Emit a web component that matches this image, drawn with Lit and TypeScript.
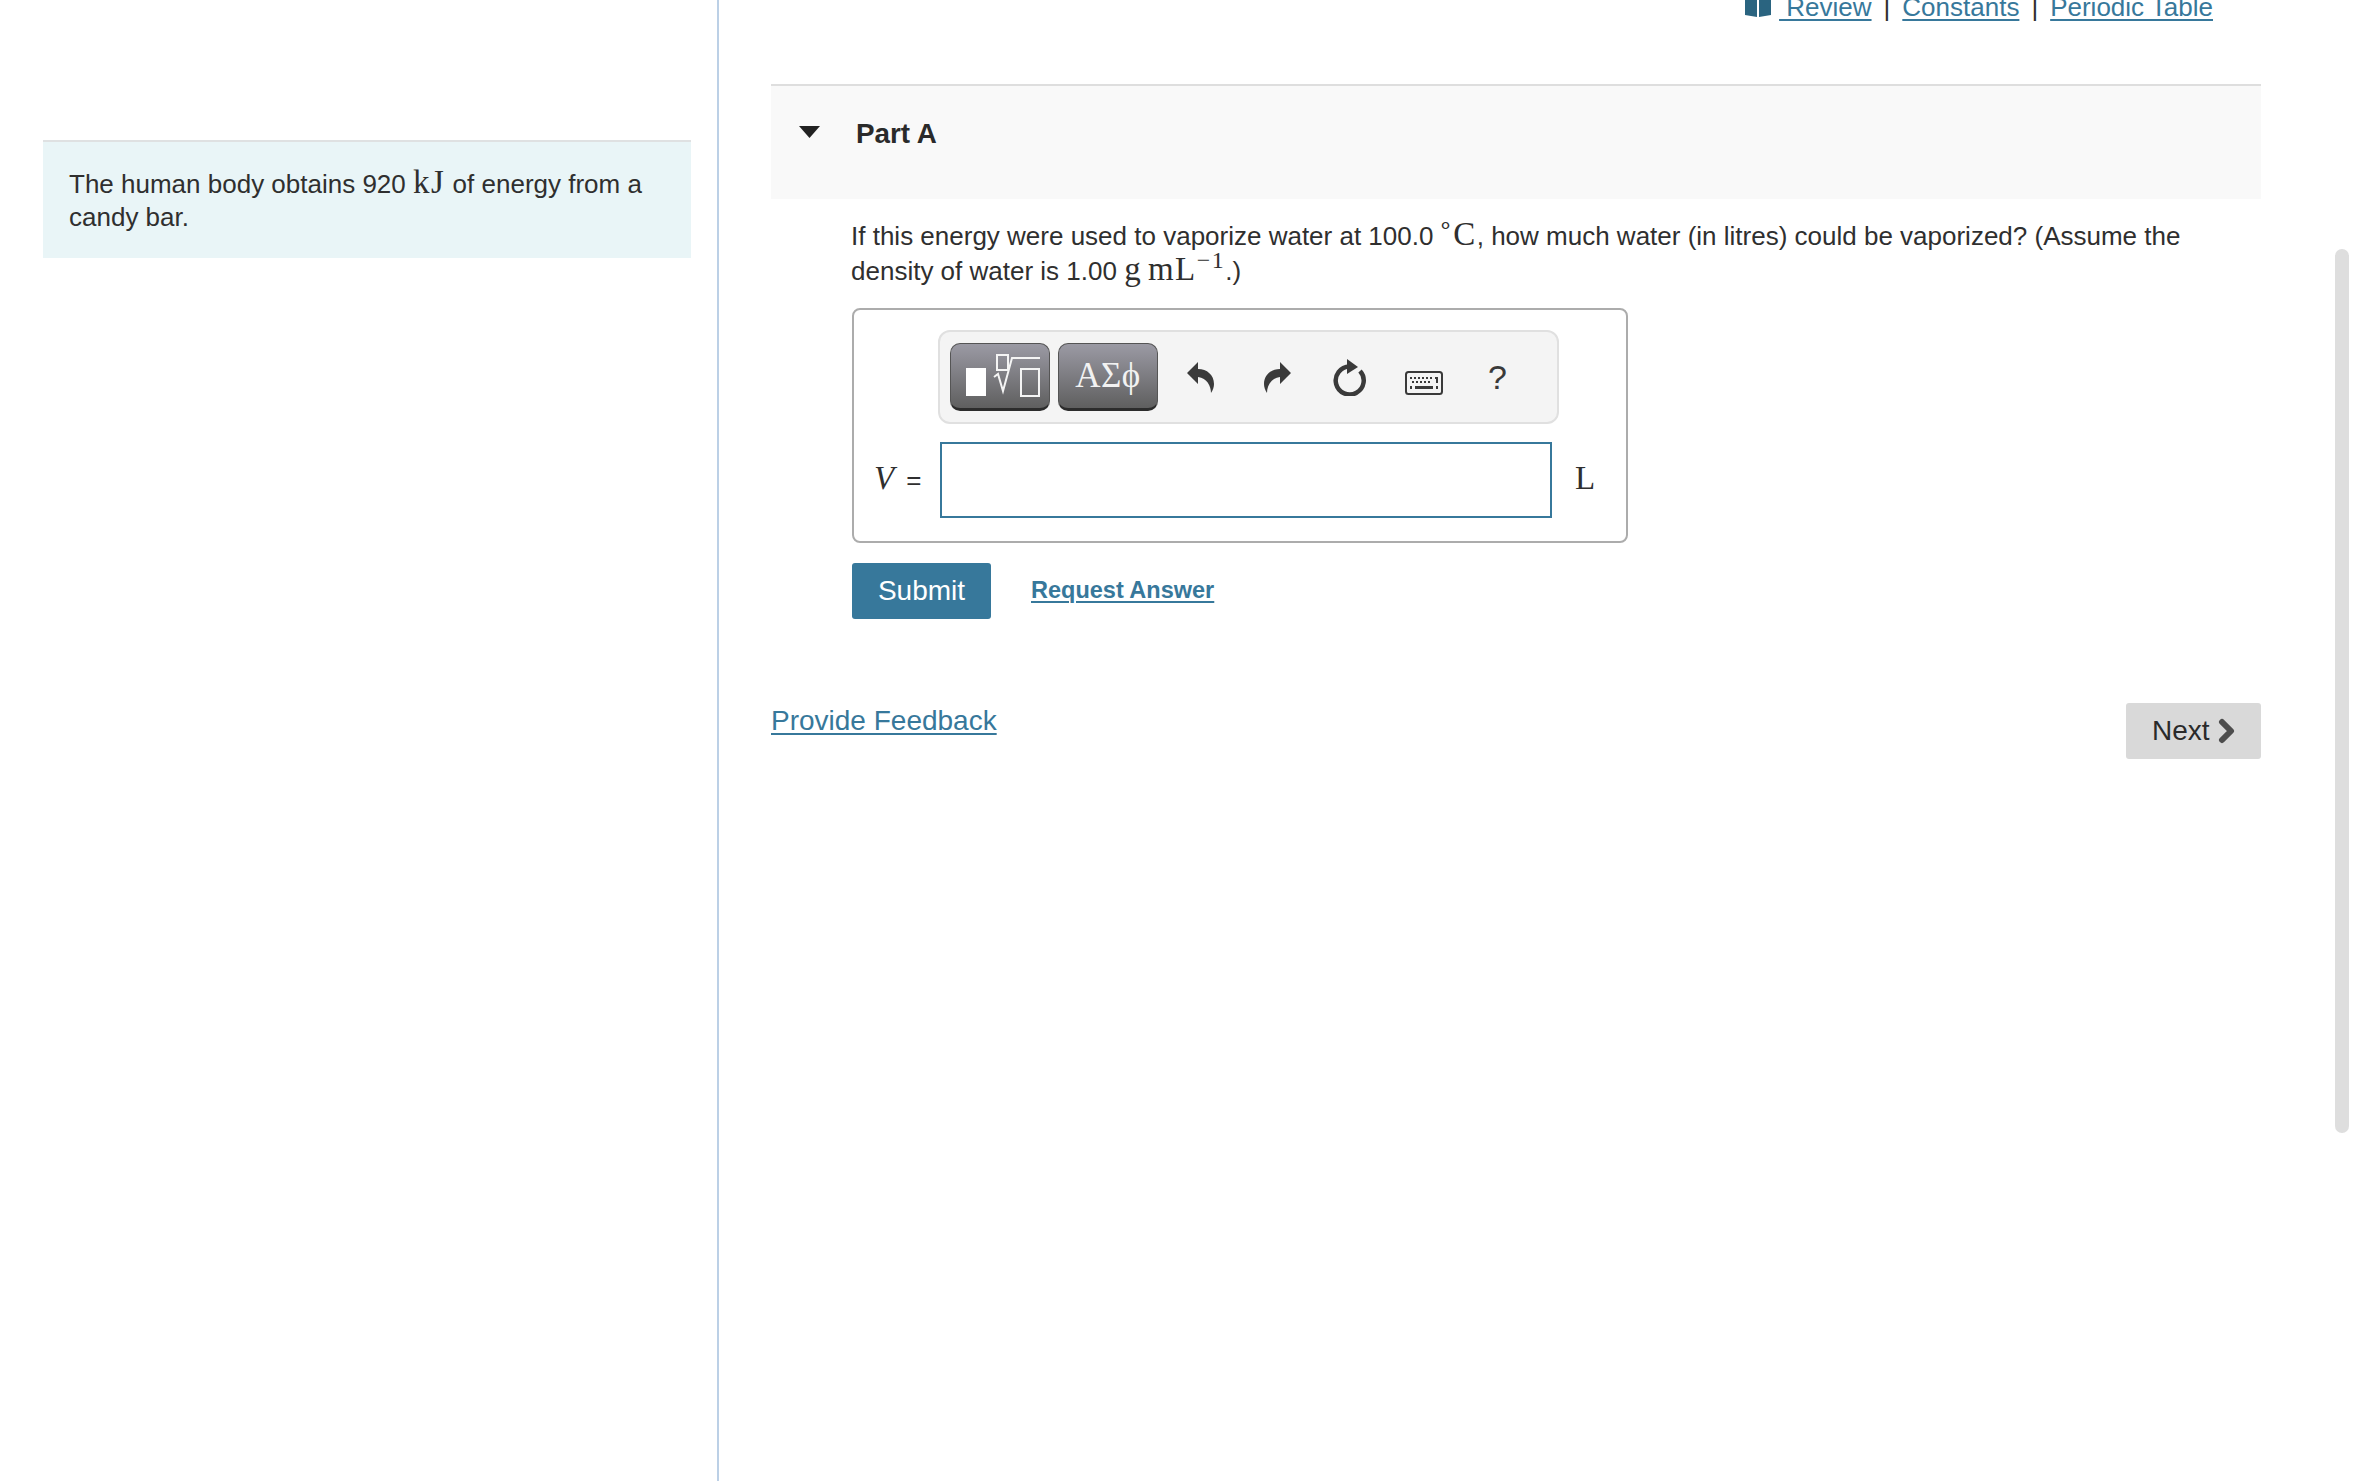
import { LitElement, html, css } from "lit";
import { customElement } from "lit/decorators.js";

const undoPath = "M0 11 L11 0 V7 C20 7 27 13 27 22 C27 25 26 28 24 31 C24 24 20 16 11 15 V22 Z";

@customElement("app-root")
export class AppRoot extends LitElement {
  static styles = css`
    :host {
      display: block;
      font-family: "Liberation Sans", Arial, sans-serif;
      color: #2f2f2f;
      background: #fff;
    }
    * { box-sizing: border-box; }
    .page { display: flex; height: 1481px; overflow: hidden; position: relative; }
    .left {
      width: 719px;
      flex: none;
      border-right: 2px solid #bcd0e6;
      padding: 140px 26px 0 43px;
    }
    .intro {
      width: 648px;
      height: 118px;
      border-top: 2px solid #dfe1e2;
      background: #e9f5f7;
      padding: 24px 26px 0 26px;
      font-size: 26px;
      line-height: 33px;
    }
    .right { flex: 1; min-width: 0; padding: 0 92px 0 52px; }
    .links {
      margin-top: -10px;
      padding: 0 48px 0 0;
      display: flex;
      justify-content: flex-end;
      align-items: flex-start;
      font-size: 26px;
      line-height: 34px;
      height: 94px;
    }
    a { color: #37789b; text-decoration: underline; text-decoration-thickness: 2px; text-underline-offset: 3px; }
    .book { width: 26px; height: 27px; margin-right: 8px; fill: #2a6480; flex: none; }
    .sep { margin: 0 12px; }
    .part-head {
      height: 115px;
      border-top: 2px solid #dedede;
      background: #f9f9f9;
      display: flex;
      align-items: flex-start;
      padding: 32px 0 0 28px;
    }
    .tri { width: 21px; height: 12px; margin: 8px 36px 0 0; fill: #222; flex: none; }
    .part-title { font-size: 27.8px; font-weight: 700; line-height: 34px; color: #2a2a2a; margin-top: -1px; }
    .body { padding: 19px 0 0 80px; }
    .question { font-size: 26px; line-height: 34px; height: 69px; }
    .m { font-family: "Liberation Serif", "DejaVu Serif", serif; font-size: 33px; line-height: 1; letter-spacing: 1.5px; }
    .m.tight { word-spacing: -4px; }
    sup { font-family: "Liberation Serif", serif; font-size: 24px; line-height: 0; }
    sup.deg { margin: 0 -1px 0 -3px; }
    .answer {
      width: 776px;
      height: 235px;
      margin: 21px 0 0 1px;
      border: 2px solid #acacac;
      border-radius: 8px;
      display: flex;
      flex-direction: column;
      padding: 20px 0 0 84px;
    }
    .toolbar {
      width: 621px;
      height: 94px;
      border: 2px solid #e0e0e0;
      border-radius: 12px;
      background: #f4f4f4;
      display: flex;
      align-items: center;
      padding: 0 0 0 10px;
    }
    .tbtn {
      width: 100px;
      height: 68px;
      border-radius: 10px;
      background: linear-gradient(#9b9aa4, #5f5f5f);
      border: 1px solid #555;
      border-bottom: 3px solid #2c2c2c;
      margin-right: 8px;
      display: flex;
      align-items: center;
      justify-content: center;
      flex: none;
    }
    .tbtn svg { width: 100px; height: 68px; flex: none; }
    .greek { font-family: "Liberation Serif", serif; font-size: 35px; color: #f2f2f2; letter-spacing: 0.5px; }
    .tool { fill: #3a3a3a; flex: none; }
    .undo { width: 27px; height: 31px; margin-left: 21px; }
    .redo { width: 27px; height: 31px; margin-left: 50px; }
    .reload { width: 33px; height: 37px; margin-left: 42px; }
    .kbd { width: 38px; height: 24px; margin-left: 39px; margin-top: 12px; }
    .help { margin-left: 45px; font-size: 34px; color: #3a3a3a; line-height: 40px; }
    .entry { display: flex; align-items: center; margin: 18px 0 0 -84px; }
    .var { width: 86px; padding-left: 20px; display: flex; align-items: baseline; flex: none; margin-top: -3px; }
    .var i { font-family: "Liberation Serif", serif; font-size: 33px; }
    .var span { font-size: 26px; margin-left: 12px; }
    .field { width: 612px; height: 76px; border: 2px solid #37789b; background: #fff; flex: none; }
    .unit { font-family: "Liberation Serif", serif; font-size: 33px; margin: -3px 0 0 23px; }
    .actions { display: flex; align-items: center; margin: 20px 0 0 1px; }
    .submit {
      width: 139px;
      height: 56px;
      background: #37789b;
      color: #fff;
      border-radius: 3px;
      border: none;
      font: 28px "Liberation Sans", Arial, sans-serif;
      padding: 0;
    }
    .req { margin-left: 40px; font-size: 23.5px; font-weight: 700; margin-top: -2px; }
    .foot { display: flex; justify-content: space-between; align-items: flex-start; margin-top: 85px; }
    .feedback { font-size: 28px; line-height: 34px; }
    .next {
      width: 135px;
      height: 56px;
      margin-top: -1px;
      background: #d9d9d9;
      border-radius: 3px;
      display: flex;
      align-items: center;
      padding-left: 26px;
      font-size: 28px;
      color: #2a2a2a;
    }
    .chev { width: 17px; height: 26px; margin-left: 8px; stroke: #4d4d4d; fill: none; stroke-width: 6; stroke-linecap: round; stroke-linejoin: round; }
    .scroll {
      position: absolute;
      left: 2335px;
      top: 249px;
      width: 14px;
      height: 884px;
      border-radius: 7px;
      background: #dedede;
    }
  `;

  render() {
    return html`<div class="page">
      <div class="left">
        <div class="intro">The human body obtains 920 <span class="m">kJ</span> of energy from a candy bar.</div>
      </div>
      <div class="right">
        <div class="links">
          <svg class="book" viewBox="0 0 26 27"><path d="M0 0H12V27L0 25ZM14 0H26V25L14 27Z"/></svg>
          <a href="#">&nbsp;Review</a><span class="sep">|</span><a href="#">Constants</a><span class="sep">|</span><a href="#">Periodic Table</a>
        </div>
        <div class="part-head">
          <svg class="tri" viewBox="0 0 21 12"><path d="M0 0H21L10.5 12Z"/></svg>
          <div class="part-title">Part A</div>
        </div>
        <div class="body">
          <div class="question">If this energy were used to vaporize water at 100.0 <span class="m"><sup class="deg">∘</sup>C</span>, how much water (in litres) could be vaporized? (Assume the density of water is 1.00 <span class="m tight">g mL<sup>−1</sup></span>.)</div>
          <div class="answer">
            <div class="toolbar">
              <div class="tbtn">
                <svg viewBox="0 0 100 68" fill="none" stroke="#f4f4f4" stroke-width="2">
                  <rect x="16" y="26" width="20" height="28" fill="#fff" stroke="none"/>
                  <rect x="47" y="13" width="11" height="15"/>
                  <path d="M44 35 L48 32 L53 49 L62 16 H90"/>
                  <rect x="71" y="27" width="18" height="27"/>
                </svg>
              </div>
              <div class="tbtn"><span class="greek">ΑΣϕ</span></div>
              <svg class="tool undo" viewBox="0 0 27 31"><path d="${undoPath}"/></svg>
              <svg class="tool redo" viewBox="0 0 27 31"><path transform="matrix(-1 0 0 1 27 0)" d="${undoPath}"/></svg>
              <svg class="tool reload" viewBox="0 0 33 37">
                <path d="M16.5 7.5 A14 14 0 1 0 27 12" fill="none" stroke="#3a3a3a" stroke-width="4.5"/>
                <path d="M14 0 L25 8 L14 15 Z"/>
              </svg>
              <svg class="tool kbd" viewBox="0 0 38 24">
                <rect x="1" y="1" width="36" height="22" rx="2.5" fill="none" stroke="#3a3a3a" stroke-width="2"/>
                <path d="M5 6h2v2H5zM9 6h2v2H9zM13 6h2v2h-2zM17 6h2v2h-2zM21 6h2v2h-2zM25 6h2v2h-2zM30 6h3v6h-2V8h-1zM7 10h2v2H7zM11 10h2v2h-2zM15 10h2v2h-2zM19 10h2v2h-2zM23 10h2v2h-2zM5 15h2v3H5zM10 15h18v3H10zM31 15h2v3h-2z"/>
              </svg>
              <span class="help">?</span>
            </div>
            <div class="entry">
              <div class="var"><i>V</i><span>=</span></div>
              <div class="field"></div>
              <span class="unit">L</span>
            </div>
          </div>
          <div class="actions">
            <button class="submit">Submit</button>
            <a class="req" href="#">Request Answer</a>
          </div>
        </div>
        <div class="foot">
          <a class="feedback" href="#">Provide Feedback</a>
          <div class="next">Next<svg class="chev" viewBox="0 0 17 26"><path d="M4 4 L13 13 L4 22"/></svg></div>
        </div>
      </div>
      <div class="scroll"></div>
    </div>`;
  }
}
